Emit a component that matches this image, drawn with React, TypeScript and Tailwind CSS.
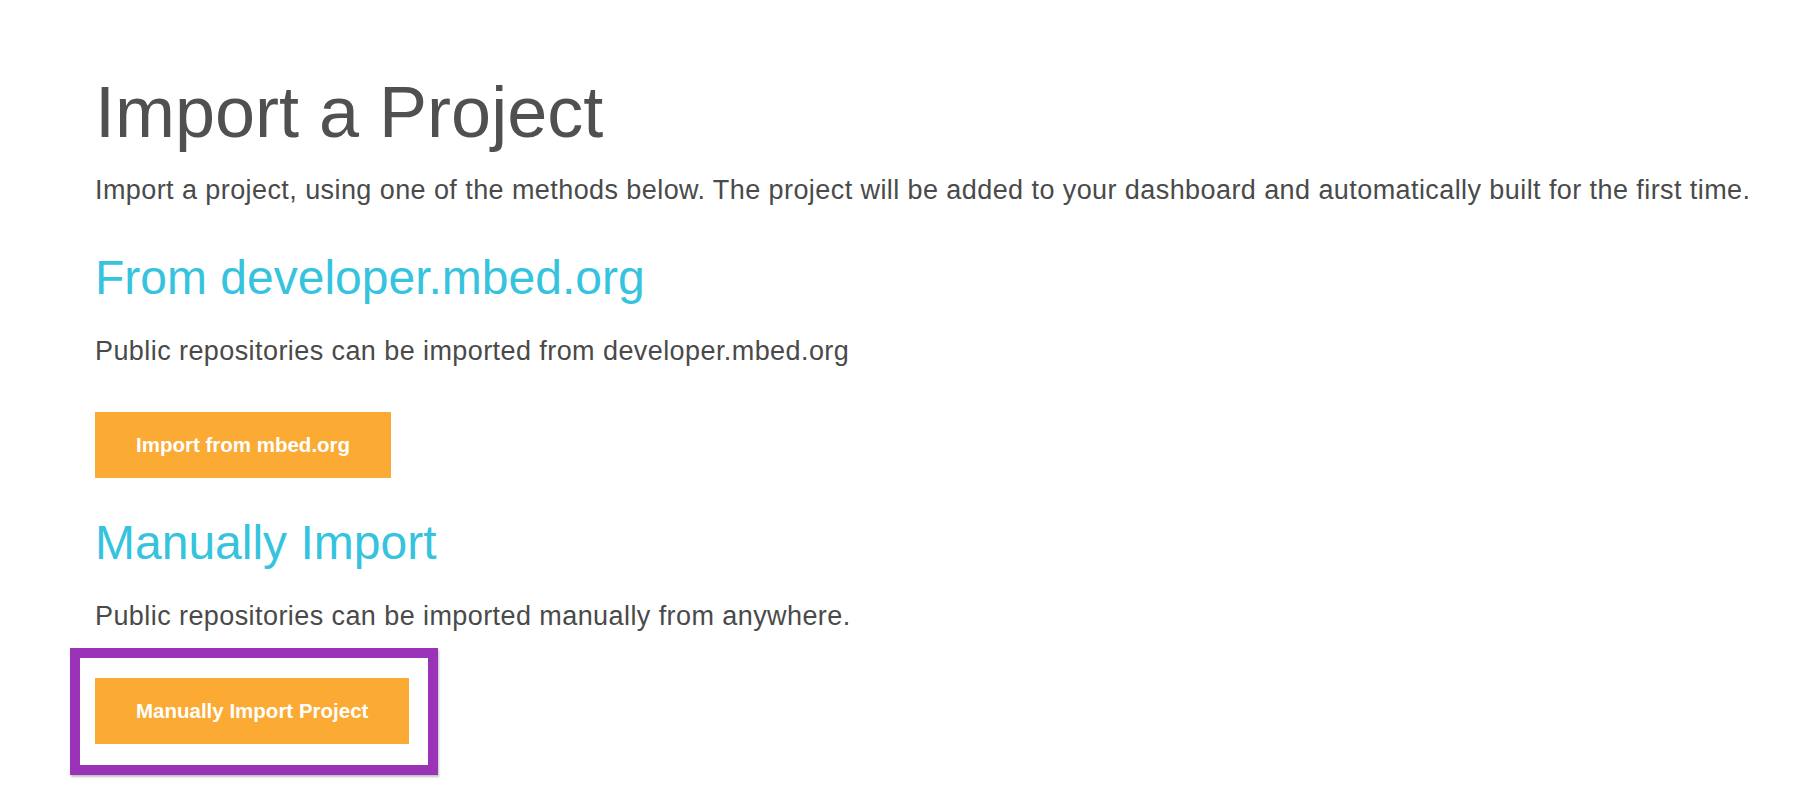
import React from "react";

const font = { fontFamily: '"Liberation Sans", Arial, sans-serif' };

const OrangeButton = ({ label }: { label: string }) => (
  <button className="h-[66px] px-[41px] bg-[#fbaa33] text-white text-[20.5px] font-bold">
    {label}
  </button>
);

export default function App() {
  return (
    <main
      style={font}
      className="min-h-[788px] w-full bg-white pl-[95px] pt-[76px] pr-10 text-[#4a4a4a]"
    >
      <h1 className="text-[72px] leading-[72px] text-[#505050]">Import a Project</h1>
      <p className="mt-[27px] text-[27px] leading-[31px] tracking-[0.42px]">
        Import a project, using one of the methods below. The project will be added to your dashboard and
        automatically built for the first time.
      </p>

      <section className="mt-[48px] flex flex-col items-start">
        <h2 className="text-[48px] leading-[48px] text-[#36c3de]">From developer.mbed.org</h2>
        <p className="mt-[34px] text-[27px] leading-[31px] tracking-[0.42px]">
          Public repositories can be imported from developer.mbed.org
        </p>
        <div className="mt-[45px]">
          <OrangeButton label="Import from mbed.org" />
        </div>
      </section>

      <section className="mt-[41px] flex flex-col items-start">
        <h2 className="text-[48px] leading-[48px] text-[#36c3de]">Manually Import</h2>
        <p className="mt-[34px] text-[27px] leading-[31px] tracking-[0.42px]">
          Public repositories can be imported manually from anywhere.
        </p>
        <div className="relative mt-[46px]">
          <OrangeButton label="Manually Import Project" />
          {/* highlight frame drawn over the button */}
          <div className="pointer-events-none absolute -left-[25px] -top-[30px] -right-[29px] -bottom-[31px] border-[10px] border-[#9a33b8] shadow-[1px_2px_2px_rgba(0,0,0,0.25)]" />
        </div>
      </section>
    </main>
  );
}
